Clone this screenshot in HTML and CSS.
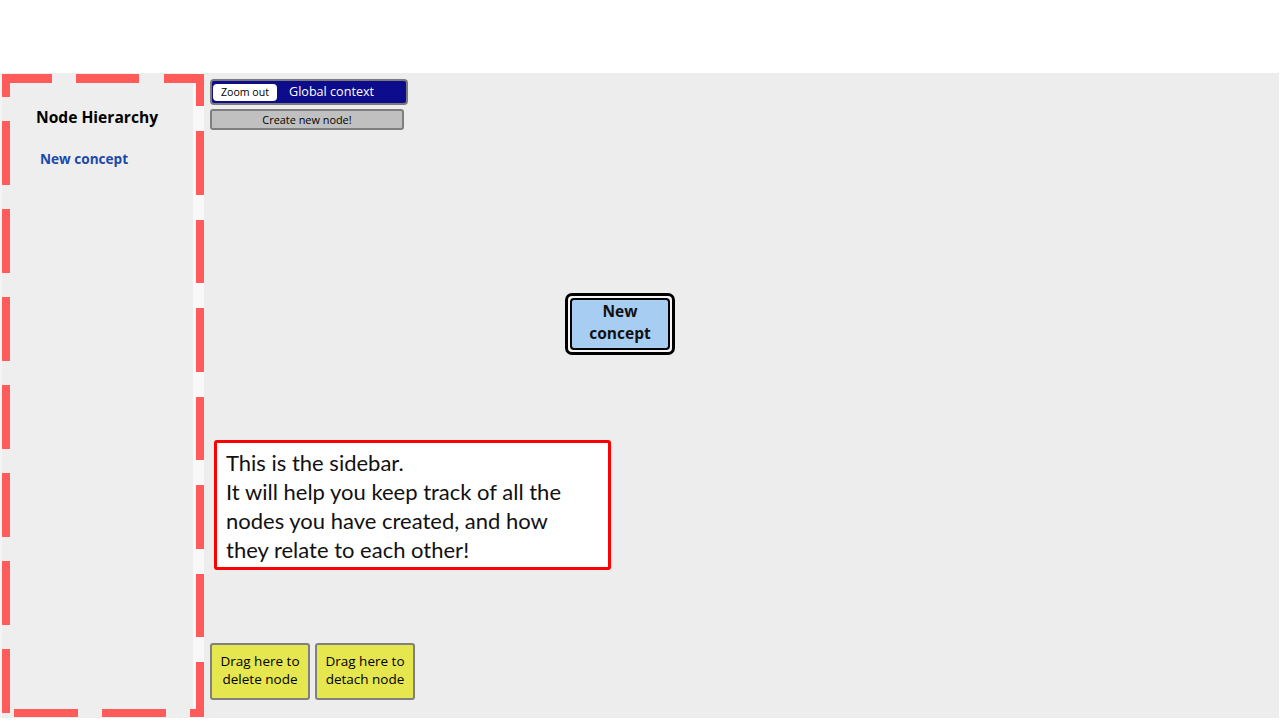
FILE: index.html
```html
<!DOCTYPE html>
<html lang="en">
<head>
<meta charset="utf-8">
<title>Node Hierarchy</title>
<link rel="stylesheet" href="styles.css">
</head>
<body>
<div class="slide">
  <div class="app">
    <aside class="sidebar">
      <h2 class="side-title">Node Hierarchy</h2>
      <ul class="tree">
        <li class="tree-item">New concept</li>
      </ul>
    </aside>
    <div class="divider"></div>
    <main class="canvas">
      <div class="context-bar">
        <button class="zoom-btn">Zoom out</button>
        <span class="context-label">Global context</span>
      </div>
      <button class="create-btn">Create new node!</button>
      <div class="spacer"></div>
      <div class="drop-row">
        <div class="drop-zone">Drag here to<br>delete node</div>
        <div class="drop-zone">Drag here to<br>detach node</div>
      </div>
      <div class="node">
        <div class="node-inner">New<br>concept</div>
      </div>
    </main>
  </div>
  <div class="callout">This is the sidebar.<br>It will help you keep track of all the nodes you have created, and how they relate to each other!</div>
  <svg class="dash-frame" width="1280" height="720" viewBox="0 0 1280 720" aria-hidden="true">
    <g fill="#ff5b5b">
      <rect x="2" y="74" width="50" height="9"/>
      <rect x="76" y="74" width="63" height="9"/>
      <rect x="164" y="74" width="40" height="9"/>
      <rect x="2" y="74" width="8" height="23"/>
      <rect x="2" y="121" width="8" height="64"/>
      <rect x="2" y="209" width="8" height="64"/>
      <rect x="2" y="297" width="8" height="64"/>
      <rect x="2" y="385" width="8" height="64"/>
      <rect x="2" y="473" width="8" height="64"/>
      <rect x="2" y="561" width="8" height="64"/>
      <rect x="2" y="649" width="8" height="64"/>
      <rect x="196" y="74" width="8" height="32"/>
      <rect x="196" y="131" width="8" height="64"/>
      <rect x="196" y="220" width="8" height="63"/>
      <rect x="196" y="308" width="8" height="64"/>
      <rect x="196" y="397" width="8" height="63"/>
      <rect x="196" y="485" width="8" height="64"/>
      <rect x="196" y="574" width="8" height="63"/>
      <rect x="196" y="662" width="8" height="55"/>
      <rect x="14" y="709" width="64" height="8"/>
      <rect x="102" y="709" width="64" height="8"/>
      <rect x="190" y="709" width="14" height="8"/>
    </g>
  </svg>
</div>
</body>
</html>
```
FILE: styles.css
```css
* { box-sizing: border-box; }
html, body { margin: 0; padding: 0; }
body {
  background: #ffffff;
  font-family: "Open Sans", "Noto Sans", sans-serif;
  width: 1280px;
  height: 720px;
  overflow: hidden;
}
.slide {
  position: relative;
  width: 1280px;
  height: 720px;
  padding-top: 73px;
}
.app {
  display: flex;
  width: 1279px;
  height: 645px;
}
.sidebar {
  width: 193px;
  background: #eeeeee;
  border-left: 2px solid #f4f4f4;
  padding-top: 33px;
}
.side-title {
  margin: 0;
  text-align: center;
  font-size: 15.6px;
  font-weight: 700;
  line-height: 22px;
  color: #000;
  padding-right: 1px;
}
.tree {
  list-style: none;
  margin: 21px 0 0 0;
  padding: 0 0 0 38px;
}
.tree-item {
  font-size: 13.6px;
  font-weight: 700;
  line-height: 20px;
  color: #1c48aa;
}
.divider {
  width: 11px;
  background: #f8f8f8;
}
.canvas {
  position: relative;
  flex: 1;
  background: #ededed;
  display: flex;
  flex-direction: column;
  align-items: flex-start;
  padding: 6px 0 18px 6px;
}
.context-bar {
  display: flex;
  align-items: center;
  width: 198px;
  height: 26px;
  background: #0c0c8c;
  border: 2px solid #7b7b7b;
  border-radius: 4px;
  padding: 0 1px;
}
.zoom-btn {
  width: 64px;
  height: 17px;
  background: #ffffff;
  border: none;
  border-radius: 4px;
  font-family: "Open Sans", "Noto Sans", sans-serif;
  font-size: 10.6px;
  line-height: 17px;
  color: #000;
  padding: 0;
}
.context-label {
  margin-left: 12px;
  color: #ffffff;
  font-size: 12.6px;
  line-height: 18px;
}
.create-btn {
  margin-top: 4px;
  width: 194px;
  height: 21px;
  background: #c0c0c0;
  border: 2px solid #7f7f7f;
  border-radius: 3px;
  font-family: "Open Sans", "Noto Sans", sans-serif;
  font-size: 10.9px;
  line-height: 15px;
  color: #000;
  padding: 0 0 1px 0;
}
.spacer { flex: 1; }
.drop-row {
  display: flex;
  gap: 5px;
}
.drop-zone {
  width: 100px;
  height: 57px;
  background: #e6e64f;
  border: 2px solid #808080;
  border-radius: 3px;
  display: flex;
  align-items: center;
  justify-content: center;
  text-align: center;
  font-size: 13.5px;
  line-height: 18px;
  color: #000;
  padding-bottom: 3px;
}
.node {
  position: absolute;
  left: 361px;
  top: 220px;
  width: 110px;
  height: 62px;
  border: 3px solid #000;
  border-radius: 7px;
  background: #f4f4f4;
  padding: 2px;
}
.node-inner {
  width: 100%;
  height: 100%;
  border: 2px solid #000;
  border-radius: 4px;
  background: #a8cdf2;
  display: flex;
  align-items: center;
  justify-content: center;
  text-align: center;
  font-size: 15.5px;
  font-weight: 700;
  line-height: 22px;
  color: #111;
  padding-bottom: 4px;
}
.callout {
  position: absolute;
  left: 214px;
  top: 440px;
  width: 397px;
  height: 130px;
  background: #ffffff;
  border: 3px solid #ff0000;
  border-radius: 3px;
  padding: 5px 30px 0 9px;
  font-family: "Lato", "Open Sans", sans-serif;
  font-size: 22px;
  line-height: 29px;
  color: #111;
}
.dash-frame {
  position: absolute;
  left: 0;
  top: 0;
  pointer-events: none;
}
```
